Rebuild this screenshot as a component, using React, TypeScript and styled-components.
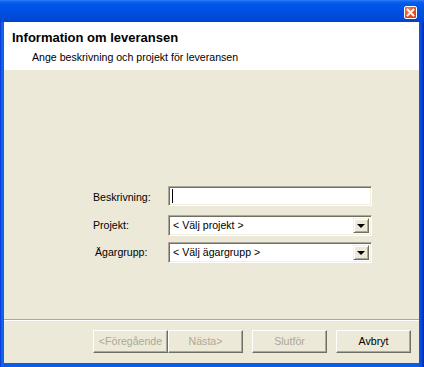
import styled, { createGlobalStyle } from "styled-components";

const GlobalStyle = createGlobalStyle`
  html, body {
    margin: 0;
    padding: 0;
    background: #ece9d8;
  }
  body {
    font-family: "Liberation Sans", Arial, sans-serif;
    font-size: 10.6px;
    color: #000;
  }
`;

const Window = styled.div`
  width: 424px;
  height: 367px;
  display: flex;
  flex-direction: column;
  box-sizing: border-box;
  background: linear-gradient(to right, #0831d9 0, #166aee 2px, #0a5ce8 4px, #0a5ce8 calc(100% - 5px), #0642d4 calc(100% - 2px), #0026b8 100%);
  padding: 0 5px 4px 4px;
  overflow: hidden;
`;

const TitleBar = styled.div`
  height: 22px;
  margin: 0 -5px 0 -4px;
  padding-right: 7px;
  display: flex;
  align-items: center;
  justify-content: flex-end;
  background: linear-gradient(
    to bottom,
    #2f80fb 0,
    #0a5ff0 2px,
    #0055ea 5px,
    #0050e2 12px,
    #004ad8 18px,
    #0042cc 22px
  );
`;

const CloseButton = styled.div`
  width: 13px;
  height: 13px;
  box-sizing: border-box;
  border: 1px solid #fff;
  border-radius: 2px;
  background: radial-gradient(circle at 35% 30%, #f08a6a 0, #e0512b 55%, #c93a14 100%);
  display: flex;
  align-items: center;
  justify-content: center;
  margin-top: 3px;
`;

const Body = styled.div`
  flex: 1;
  display: flex;
  flex-direction: column;
  background: #ece9d8;
`;

const Header = styled.div`
  height: 48px;
  box-sizing: border-box;
  background: #fff;
  padding: 8px 0 0 8px;
`;

const Title = styled.div`
  font-weight: bold;
  font-size: 13px;
  line-height: 16px;
`;

const Subtitle = styled.div`
  line-height: 13px;
  margin: 5px 0 0 20px;
`;

const Content = styled.div`
  height: 249px;
  box-sizing: border-box;
  padding: 116px 0 0 89px;
`;

const Form = styled.div`
  display: grid;
  grid-template-columns: 75px 204px;
  row-gap: 6px;
  align-items: center;
`;

const Label = styled.div<{ $indent?: number }>`
  padding-left: ${(p) => p.$indent ?? 0}px;
  line-height: 13px;
`;

const Sunken = styled.div<{ $h: number }>`
  height: ${(p) => p.$h}px;
  box-sizing: border-box;
  background: #fff;
  border: 1px solid;
  border-color: #aca899 #fff #fff #aca899;
  box-shadow: inset 1px 1px 0 #716f64, inset -1px -1px 0 #f1efe2;
  display: flex;
  align-items: center;
  padding: 0 2px 0 4px;
`;

const Caret = styled.div`
  width: 1px;
  height: 14px;
  background: #000;
  margin-left: -1px;
`;

const SelectText = styled.div`
  flex: 1;
  line-height: 13px;
`;

const ArrowButton = styled.div`
  width: 16px;
  height: 15px;
  box-sizing: border-box;
  background: #ece9d8;
  border: 1px solid;
  border-color: #f1efe2 #716f64 #716f64 #f1efe2;
  box-shadow: inset 1px 1px 0 #fff, inset -1px -1px 0 #aca899;
  display: flex;
  align-items: center;
  justify-content: center;
`;

const Triangle = styled.div`
  width: 0;
  height: 0;
  border-left: 4px solid transparent;
  border-right: 4px solid transparent;
  border-top: 4px solid #000;
  margin-top: 1px;
`;

const Separator = styled.div`
  height: 1px;
  background: #aca899;
  border-bottom: 1px solid #fff;
`;

const Footer = styled.div`
  flex: 1;
  display: flex;
  justify-content: flex-end;
  align-items: flex-start;
  padding: 9px 8px 0 0;
`;

const ButtonGroup = styled.div`
  display: flex;
  margin-right: 9px;
`;

const Button = styled.div<{ $disabled?: boolean; $gap?: number }>`
  width: 75px;
  height: 23px;
  box-sizing: border-box;
  margin-left: ${(p) => p.$gap ?? 0}px;
  background: #ece9d8;
  border: 1px solid;
  border-color: #fff #716f64 #716f64 #fff;
  box-shadow: inset -1px -1px 0 #aca899;
  display: flex;
  align-items: center;
  justify-content: center;
  color: ${(p) => (p.$disabled ? "#aca899" : "#000")};
  line-height: 13px;
  padding-bottom: 1px;
`;

const Select = ({ text }: { text: string }) => (
  <Sunken $h={21}>
    <SelectText>{text}</SelectText>
    <ArrowButton>
      <Triangle />
    </ArrowButton>
  </Sunken>
);

export default function App() {
  return (
    <>
      <GlobalStyle />
      <Window>
        <TitleBar>
          <CloseButton>
            <svg width="9" height="9" viewBox="0 0 9 9">
              <path d="M1.5 1.5 L7.5 7.5 M7.5 1.5 L1.5 7.5" stroke="#fff" strokeWidth="1.8" strokeLinecap="square" />
            </svg>
          </CloseButton>
        </TitleBar>
        <Body>
          <Header>
            <Title>Information om leveransen</Title>
            <Subtitle>Ange beskrivning och projekt för leveransen</Subtitle>
          </Header>
          <Content>
            <Form>
              <Label>Beskrivning:</Label>
              <Sunken $h={20} style={{ marginBottom: 3 }}>
                <Caret />
              </Sunken>
              <Label>Projekt:</Label>
              <Select text="< Välj projekt >" />
              <Label $indent={2}>Ägargrupp:</Label>
              <Select text="< Välj ägargrupp >" />
            </Form>
          </Content>
          <Separator />
          <Footer>
            <ButtonGroup>
              <Button $disabled>&lt;Föregående</Button>
              <Button $disabled>Nästa&gt;</Button>
            </ButtonGroup>
            <Button $disabled>Slutför</Button>
            <Button $gap={9}>Avbryt</Button>
          </Footer>
        </Body>
      </Window>
    </>
  );
}
